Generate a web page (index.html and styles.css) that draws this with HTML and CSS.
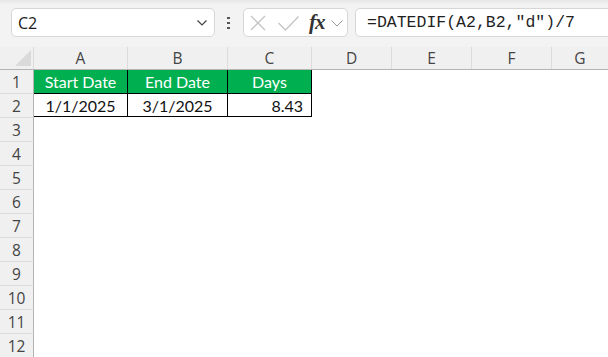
FILE: index.html
```html
<!DOCTYPE html>
<html lang="en">
<head>
  <meta charset="UTF-8" />
  <title>Sheet - DATEDIF</title>
  <link rel="stylesheet" href="styles.css">
</head>
<body>
  <div class="toolbar">
    <div class="namebox">
      <span class="name">C2</span>
      <svg class="chev" width="10" height="6" viewBox="0 0 10 6"><path d="M0.5 0.5 L5 5 L9.5 0.5" fill="none" stroke="#444" stroke-width="1.2"/></svg>
    </div>
    <div class="dots"><i></i><i></i><i></i></div>
    <div class="fxgroup">
      <svg class="icon-x" width="16" height="16" viewBox="0 0 16 16"><path d="M1 1 L15 15 M15 1 L1 15" stroke="#c4c4c4" stroke-width="1.3" fill="none"/></svg>
      <svg class="icon-ok" width="21" height="15" viewBox="0 0 21 15"><path d="M0.5 7 L7.5 14 L20.5 0.5" stroke="#c4c4c4" stroke-width="1.3" fill="none"/></svg>
      <span class="fx">fx</span>
      <svg class="chev-sm" width="12" height="7" viewBox="0 0 12 7"><path d="M0.5 0.5 L6 6 L11.5 0.5" fill="none" stroke="#9a9a9a" stroke-width="1"/></svg>
    </div>
    <div class="formula">=DATEDIF(A2,B2,"d")/7</div>
  </div>

  <div class="sheet">
    <div class="row head">
      <div class="rh corner"><span class="tri"></span></div>
      <div class="ch col-a">A</div>
      <div class="ch col-b">B</div>
      <div class="ch col-c">C</div>
      <div class="ch col-d">D</div>
      <div class="ch col-e">E</div>
      <div class="ch col-f">F</div>
      <div class="ch col-g">G</div>
    </div>
    <div class="row">
      <div class="rh">1</div>
      <div class="cell th col-a">Start Date</div>
      <div class="cell th col-b">End Date</div>
      <div class="cell th col-c">Days</div>
    </div>
    <div class="row">
      <div class="rh">2</div>
      <div class="cell td col-a">1/1/2025</div>
      <div class="cell td col-b">3/1/2025</div>
      <div class="cell td num col-c">8.43</div>
    </div>
    <div class="row"><div class="rh">3</div></div>
    <div class="row"><div class="rh">4</div></div>
    <div class="row"><div class="rh">5</div></div>
    <div class="row"><div class="rh">6</div></div>
    <div class="row"><div class="rh">7</div></div>
    <div class="row"><div class="rh">8</div></div>
    <div class="row"><div class="rh">9</div></div>
    <div class="row"><div class="rh">10</div></div>
    <div class="row"><div class="rh">11</div></div>
    <div class="row"><div class="rh">12</div></div>
  </div>
</body>
</html>
```

FILE: styles.css
```css
* {
  box-sizing: border-box;
}
html, body {
  margin: 0;
  padding: 0;
  overflow: hidden;
  background: #ffffff;
}
body {
  font-family: 'Lato', 'Open Sans', sans-serif;
  width: 608px;
  height: 357px;
}
.toolbar {
  height: 47px;
  display: flex;
  align-items: center;
  padding: 0 0 2px 11px;
  background: linear-gradient(#e6e6e6 0px, #f3f3f3 5px, #f3f3f3);
  overflow: hidden;
}
.namebox {
  flex: none;
  width: 204px;
  height: 29px;
  background: #fff;
  border: 1px solid #d6d6d6;
  border-radius: 5px;
  display: flex;
  align-items: center;
  padding: 0 6px 0 6px;
}
.name {
  flex: 1;
  font-family: 'Open Sans', sans-serif;
  font-size: 16px;
  color: #1a1a1a;
}
.chev {
  margin-right: 1px;
}
.dots {
  flex: none;
  display: flex;
  flex-direction: column;
  gap: 3px;
  margin: 0 13px 0 12px;
}
.dots i {
  display: block;
  width: 3px;
  height: 2px;
  background: #555;
}
.fxgroup {
  flex: none;
  width: 105px;
  height: 29px;
  background: #fff;
  border: 1px solid #d6d6d6;
  border-radius: 5px;
  display: flex;
  align-items: center;
  padding-left: 6px;
}
.icon-x {
  margin-top: 1px;
}
.icon-ok {
  margin-left: 12px;
  margin-top: 1px;
}
.fx {
  font-family: 'Liberation Serif', serif;
  font-style: italic;
  font-weight: bold;
  font-size: 21px;
  color: #333;
  margin-left: 10px;
  letter-spacing: -1px;
  line-height: 1;
}
.chev-sm {
  margin-left: 6px;
  margin-top: 2px;
}
.formula {
  flex: none;
  width: 300px;
  height: 29px;
  margin-left: 7px;
  background: #fff;
  border: 1px solid #d6d6d6;
  border-radius: 5px;
  padding-left: 11px;
  font-family: 'Liberation Mono', monospace;
  font-size: 16.5px;
  line-height: 27px;
  color: #1f1f1f;
}
.sheet {
  display: flex;
  flex-direction: column;
}
.row {
  display: flex;
  height: 24px;
}
.row.head {
  height: 23px;
  background: #f0f0f0;
  border-bottom: 1px solid #b4b4b4;
}
.rh {
  width: 34px;
  flex: none;
  background: #f0f0f0;
  border-right: 1px solid #b4b4b4;
  border-bottom: 1px solid #dcdcdc;
  text-align: center;
  font-family: 'Open Sans', sans-serif;
  font-size: 15.5px;
  line-height: 24px;
  color: #444;
}
.corner {
  position: relative;
  border-bottom: none;
  border-right: 1px solid #dcdcdc;
}
.tri {
  position: absolute;
  right: 2px;
  bottom: 3px;
  width: 0;
  height: 0;
  border-left: 16px solid transparent;
  border-bottom: 16px solid #dadada;
}
.ch {
  flex: none;
  border-right: 1px solid #dcdcdc;
  text-align: center;
  font-family: 'Open Sans', sans-serif;
  font-size: 15.5px;
  line-height: 22px;
  color: #444;
}
.col-a { width: 94px; }
.col-b { width: 100px; }
.col-c { width: 84px; }
.col-d, .col-e, .col-f { width: 80px; }
.col-g { flex: 1; border-right: none; }
.cell {
  flex: none;
  border-right: 1px solid #000;
  border-bottom: 1px solid #000;
  font-size: 16px;
  line-height: 24px;
  text-align: center;
  white-space: nowrap;
}
.th {
  background: #00b050;
  color: #fff;
}
.td {
  color: #111;
  height: 23px;
  line-height: 23px;
}
.num {
  text-align: right;
  padding-right: 8px;
}
```
